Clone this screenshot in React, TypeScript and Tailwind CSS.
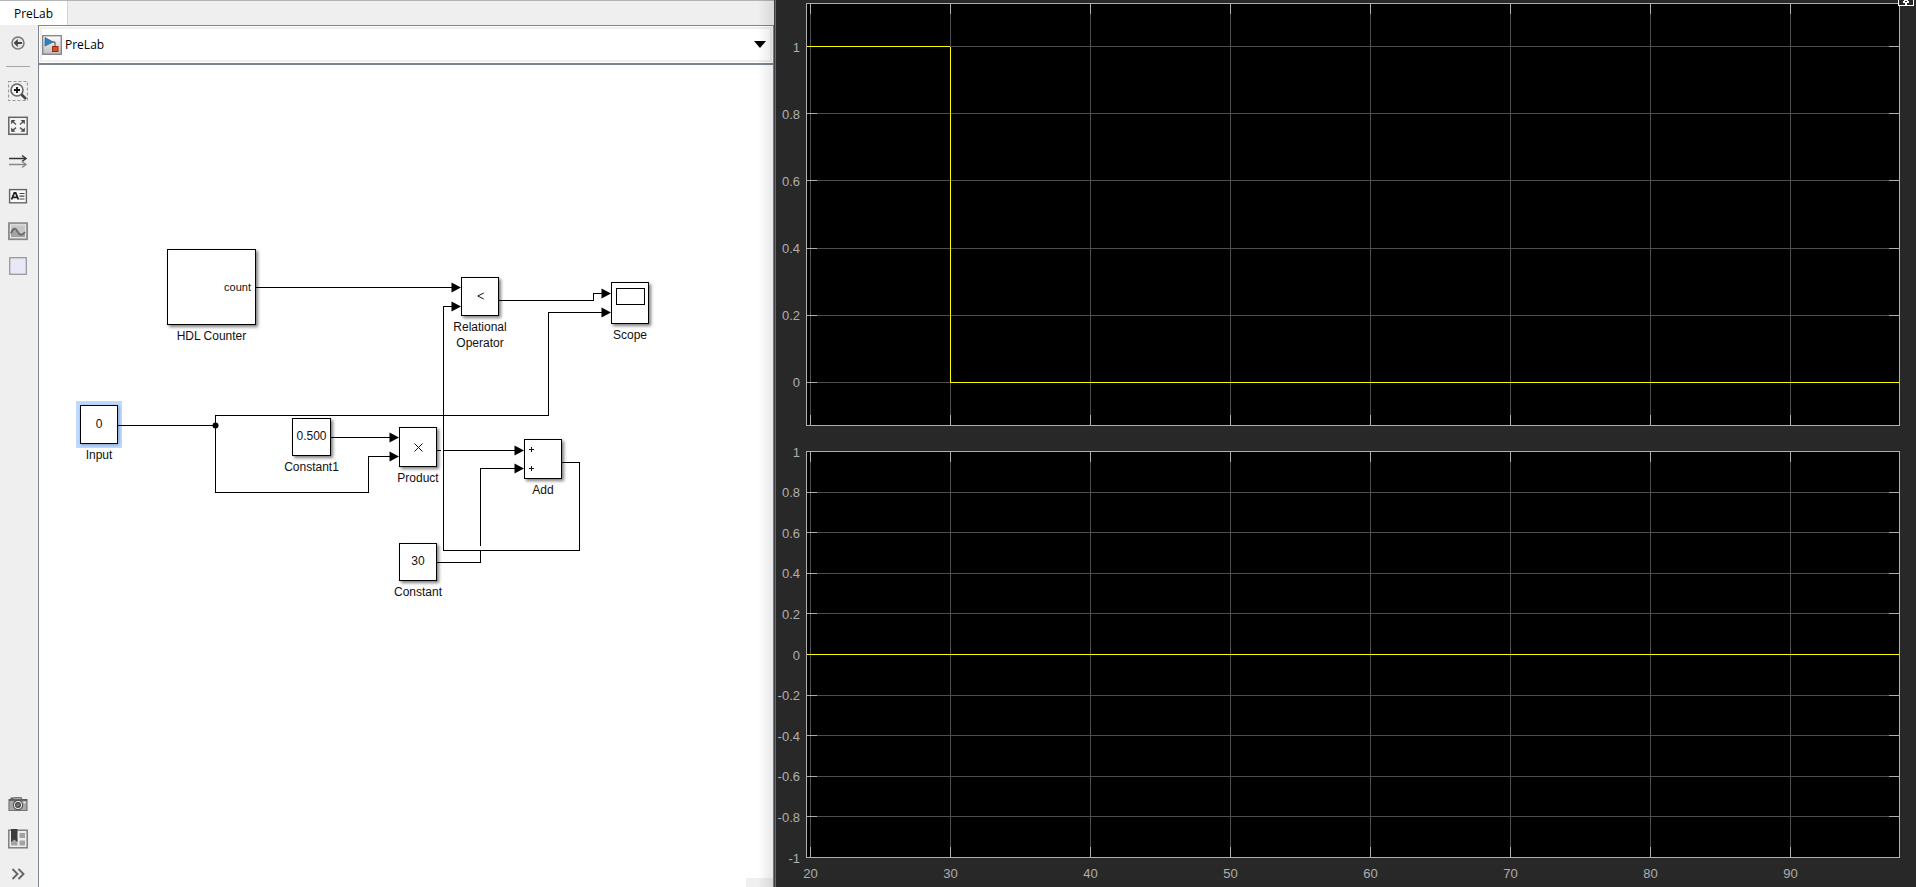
import type { ReactNode } from "react";

type Block = {
  name: string;
  label: string[];
  place: string;
  size: string;
  selected?: boolean;
  content?: ReactNode;
};

const blocks: Block[] = [
  {
    name: "HDL Counter",
    label: ["HDL Counter"],
    place: "left-[128px] top-[184px]",
    size: "w-[89px] h-[76px]",
    content: <span className="ml-auto pr-1 text-[11px]">count</span>,
  },
  {
    name: "Input",
    label: ["Input"],
    place: "left-[41px] top-[340px]",
    size: "w-[38px] h-[39px]",
    selected: true,
    content: <span className="pb-0.5">0</span>,
  },
  {
    name: "Constant1",
    label: ["Constant1"],
    place: "left-[253px] top-[353px]",
    size: "w-[39px] h-[38px]",
    content: <span className="pb-0.5">0.500</span>,
  },
  {
    name: "Product",
    label: ["Product"],
    place: "left-[360px] top-[362px]",
    size: "w-[38px] h-10",
    content: (
      <svg className="size-[9px]" viewBox="0 0 9 9" stroke="#111" fill="none">
        <path d="M.5 .5 8.5 8.5M8.5 .5 .5 8.5" />
      </svg>
    ),
  },
  {
    name: "Add",
    label: ["Add"],
    place: "left-[485px] top-[374px]",
    size: "w-[38px] h-10",
    content: (
      <span className="mr-auto flex flex-col gap-[14px] pl-1">
        {[0, 1].map((i) => (
          <svg key={i} className="size-[5px]" viewBox="0 0 5 5" stroke="#111" shapeRendering="crispEdges">
            <path d="M0 2.5H5M2.5 0V5" />
          </svg>
        ))}
      </span>
    ),
  },
  {
    name: "Constant",
    label: ["Constant"],
    place: "left-[360px] top-[478px]",
    size: "w-[38px] h-[38px]",
    content: <span className="pb-0.5">30</span>,
  },
  {
    name: "Relational Operator",
    label: ["Relational", "Operator"],
    place: "left-[422px] top-[212px]",
    size: "w-[38px] h-[39px]",
    content: (
      <svg className="mb-0.5 h-2 w-[7px]" viewBox="0 0 7 8" stroke="#111" fill="none">
        <path d="M6.8 1 .8 4 6.8 7" />
      </svg>
    ),
  },
  {
    name: "Scope",
    label: ["Scope"],
    place: "left-[572px] top-[217px]",
    size: "w-[38px] h-[42px]",
    content: <span className="mb-auto mt-[5px] h-[17px] w-[29px] border border-black" />,
  },
];

const wires = [
  "M217 222.5H414",
  "M460 235.5H554.5V228.5H564",
  "M79 360.5H176.5",
  "M176.5 360.5V350.5H509.5V247.5H564",
  "M176.5 360.5V427.5H329.5V391.5H352",
  "M292 372.5H352",
  "M398 385.5H402M405 385.5H477",
  "M398 497.5H441.5V486M441.5 481V403.5H477",
  "M523 397.5H540.5V485.5H404.5V241.5H414",
];

const arrowTips = [
  [422, 222],
  [422, 241],
  [572, 228],
  [572, 247],
  [360, 372],
  [360, 391],
  [485, 385],
  [485, 403],
];

function BlockNode({ block }: { block: Block }) {
  return (
    <div className={`absolute ${block.place} ${block.size}`}>
      <div
        className={`flex size-full items-center justify-center border border-black bg-white ${
          block.selected
            ? "shadow-[1px_1px_3px_#7f9cc4,0_0_0_4px_#bfdaff]"
            : "shadow-[2px_2px_3px_rgba(0,0,0,0.5)]"
        }`}
      >
        {block.content}
      </div>
      <div className="flex flex-col items-center pt-[3px] leading-4 whitespace-nowrap">
        {block.label.map((line) => (
          <span key={line}>{line}</span>
        ))}
      </div>
    </div>
  );
}

function Icon({ children }: { children: ReactNode }) {
  return (
    <svg className="size-5" viewBox="0 0 20 20" fill="none" stroke="#4a4a4a" strokeWidth="1.2">
      {children}
    </svg>
  );
}

const topTools = [
  {
    name: "Zoom",
    icon: (
      <Icon>
        <rect x=".5" y=".5" width="19" height="19" stroke="#999" strokeDasharray="3 2" />
        <circle cx="9" cy="9" r="6" fill="#f4f4f4" stroke="#666" strokeWidth="1.6" />
        <path d="M6 9H12M9 6V12" stroke="#111" strokeWidth="1.8" />
        <path d="M13.5 13.5 18 18" stroke="#444" strokeWidth="2.6" />
      </Icon>
    ),
  },
  {
    name: "Fit to view",
    icon: (
      <Icon>
        <rect x=".8" y="1.3" width="18.4" height="17" fill="#f5f5f5" stroke="#666" strokeWidth="1.5" />
        <path d="M3.2 4H7.4L3.2 8.200ZM16.800 4H12.600L16.800 8.200ZM16.800 15.800H12.600L16.800 11.600ZM3.200 15.800H7.400L3.200 11.600Z" fill="#444" stroke="none" />
        <path d="M4 4.800 8 8.400M16 4.800 12 8.400M16 15 12 11.600M4 15 8 11.600" stroke="#555" strokeWidth="1.400" />
      </Icon>
    ),
  },
  {
    name: "Signal lines",
    icon: (
      <Icon>
        <path d="M1 7.500H17" stroke="#333" strokeWidth="1.500" />
        <path d="M14 4.500 18 7.500 14 10.500" stroke="#333" strokeWidth="1.500" />
        <path d="M1 13.500H17" stroke="#888" strokeWidth="1.500" />
        <path d="M14 10.500 18 13.500 14 16.500" stroke="#888" strokeWidth="1.500" />
      </Icon>
    ),
  },
  {
    name: "Annotation",
    icon: (
      <Icon>
        <rect x="1.6" y="3.6" width="16.8" height="13.2" fill="#fafafa" stroke="#666" strokeWidth="1.400" />
        <path d="M3.6 13.5 6.3 7H7.7L10.4 13.5M4.8 11.4H9.2" stroke="#222" strokeWidth="1.8" />
        <path d="M11.5 7.5H16.5M11.5 10.2H16.5M11.5 13H16.5" stroke="#444" />
      </Icon>
    ),
  },
  {
    name: "Image",
    icon: (
      <Icon>
        <rect x=".8" y="2" width="18.4" height="16.400" fill="#b8b8b8" stroke="#888" strokeWidth="1.5" />
        <rect x="2.6" y="3.8" width="14.8" height="12.8" fill="#c6c6c6" stroke="#e2e2e2" />
        <path d="M3 12.500C5 6.500 7.500 6.500 9.500 10.500S14 14.500 17 11V16H3Z" fill="#a2a2a2" stroke="none" />
        <path d="M3 12.500C5 6.500 7.500 6.500 9.500 10.500S14 15 17 11" stroke="#6a6a6a" strokeWidth="1.8" />
      </Icon>
    ),
  },
  {
    name: "Area",
    icon: (
      <Icon>
        <rect x="1.7" y="1.700" width="16.600" height="16.600" fill="#e9e8f8" stroke="#999" strokeWidth="1.300" />
      </Icon>
    ),
  },
];

const bottomTools = [
  {
    name: "Screenshot",
    icon: (
      <Icon>
        <path d="M1 5.500H5L6 3.500H13L14 5.500H19V16.500H1Z" fill="#a8a8a8" stroke="#777" />
        <path d="M1 6H19" stroke="#555" strokeWidth="1.500" />
        <path d="M2.500 4.200H5" stroke="#555" strokeWidth="1.400" />
        <circle cx="10" cy="11" r="4.600" fill="#f0f0f0" stroke="#555" />
        <circle cx="10" cy="11" r="2.400" fill="#777" stroke="#444" />
        <path d="M15.500 8.500H17.500" stroke="#fff" strokeWidth="1.500" />
      </Icon>
    ),
  },
  {
    name: "Model browser",
    icon: (
      <Icon>
        <rect x=".8" y="1.200" width="18.400" height="17.600" fill="#ededed" stroke="#777" strokeWidth="1.400" />
        <path d="M11.500 4H17V9H11.500ZM11.500 11.500H17V16.500H11.500ZM3 10H9.500V16.500H3Z" fill="#a3a3a3" stroke="none" />
        <path d="M3 0H9.500V13L6.250 10.500 3 13Z" fill="#3c3c3c" stroke="none" />
      </Icon>
    ),
  },
  {
    name: "Show more",
    icon: (
      <Icon>
        <path d="M4.500 5 9.500 10 4.500 15M10.500 5 15.500 10 10.500 15" stroke="#666" strokeWidth="1.900" />
      </Icon>
    ),
  },
];

function Toolbar() {
  return (
    <nav aria-label="Tools" className="flex w-[38px] shrink-0 flex-col justify-between bg-[#efefef] pt-2 pr-0.5 pb-[3px]">
      <div className="flex flex-col items-center">
        <button aria-label="Back" className="size-5">
          <Icon>
            <circle cx="10" cy="10" r="6" fill="#e6e6e6" stroke="#777" strokeWidth="1.500" />
            <path d="M14 10H8" stroke="#444" strokeWidth="2" />
            <path d="M9.500 6.500 6 10 9.500 13.500Z" fill="#444" stroke="#444" strokeWidth=".6" />
          </Icon>
        </button>
        <hr className="mt-[13px] mb-3.5 w-6 border-[#a6a6a6]" />
        <div className="flex flex-col gap-[15px]">
          {topTools.map((t) => (
            <button key={t.name} aria-label={t.name} className="size-5">
              {t.icon}
            </button>
          ))}
        </div>
      </div>
      <div className="flex flex-col items-center gap-[15px]">
        {bottomTools.map((t) => (
          <button key={t.name} aria-label={t.name} className="size-5">
            {t.icon}
          </button>
        ))}
      </div>
    </nav>
  );
}

function ModelPath() {
  return (
    <div className="h-10 shrink-0 border-t border-b-2 border-[#7d838f] bg-white p-px">
      <div className="flex h-full items-center border-2 border-[#efefef]">
        <svg className="size-5" viewBox="0 0 20 20">
          <defs>
            <linearGradient id="tile" x2="0" y2="1">
              <stop offset="0" stopColor="#fff" />
              <stop offset="1" stopColor="#bdbdbd" />
            </linearGradient>
          </defs>
          <rect x=".7" y=".7" width="18.600" height="18.600" fill="url(#tile)" stroke="#888" strokeWidth="1.400" />
          <path d="M10 7H13V12" fill="none" stroke="#444" />
          <path d="M3 2.500 11 7 3 11Z" fill="#2e83bd" stroke="#1d5f91" strokeWidth=".7" />
          <rect x="10.500" y="11.500" width="5.500" height="5" fill="#d2502a" stroke="#9a2c12" />
        </svg>
        <div className="relative flex flex-1 items-center pl-[3px]">
          <select
            id="model-path"
            aria-label="Model path"
            className="h-6 w-full appearance-none bg-transparent text-xs leading-5"
          >
            <option>PreLab</option>
          </select>
          <svg className="pointer-events-none absolute top-2 right-1 h-[7px] w-3" viewBox="0 0 12 7">
            <path d="M0 0H12L6 7Z" />
          </svg>
        </div>
      </div>
    </div>
  );
}

function Diagram() {
  return (
    <main className="relative flex-1 overflow-hidden bg-white font-['Liberation_Sans',Arial,sans-serif] text-xs text-[#111]">
      {blocks.map((b) => (
        <BlockNode key={b.name} block={b} />
      ))}
      <svg className="pointer-events-none absolute inset-0 size-full" fill="none" stroke="#000">
        {wires.map((d) => (
          <path key={d} d={d} shapeRendering="crispEdges" />
        ))}
        <circle cx="176.500" cy="360.500" r="3" fill="#000" stroke="none" />
        {arrowTips.map(([x, y]) => (
          <path key={`${x}-${y}`} d={`M${x} ${y + 0.5}l-9.500 -5v10z`} fill="#000" stroke="none" />
        ))}
      </svg>
      <div className="absolute right-0 bottom-0 h-[9px] w-[27px] bg-[#efefef]" />
    </main>
  );
}

type PlotProps = {
  title: string;
  yMin: number;
  yMax: number;
  yTicks: number[];
  trace: [number, number][];
  showTime?: boolean;
};

const timeTicks = [20, 30, 40, 50, 60, 70, 80, 90];
const timeMin = 19.75;
const timeMax = 97.75;

function Plot({ title, yMin, yMax, yTicks, trace, showTime }: PlotProps) {
  const px = (t: number) => `${((t - timeMin) / (timeMax - timeMin)) * 100}%`;
  const py = (v: number) => `${((yMax - v) / (yMax - yMin)) * 100}%`;
  const inner = yTicks.filter((v) => v < yMax && v > yMin);
  return (
    <div className="min-h-0 border border-[#afafaf] bg-black">
      <svg
        role="img"
        aria-label={title}
        className="size-full overflow-visible font-['Liberation_Sans',Arial,sans-serif] text-[13px]"
        shapeRendering="crispEdges"
      >
        {timeTicks.map((t) => (
          <g key={t}>
            <line x1={px(t)} x2={px(t)} y1="0" y2="100%" stroke="#4d4d4d" />
            <line x1={px(t)} x2={px(t)} y1="0" y2="10" stroke="#afafaf" />
            <svg y="100%" className="overflow-visible">
              <line x1={px(t)} x2={px(t)} y1="-10" y2="0" stroke="#afafaf" />
            </svg>
          </g>
        ))}
        {inner.map((v) => (
          <g key={v}>
            <line x1="0" x2="100%" y1={py(v)} y2={py(v)} stroke="#4d4d4d" />
            <line x1="0" x2="10" y1={py(v)} y2={py(v)} stroke="#afafaf" />
            <svg x="100%" className="overflow-visible">
              <line x1="-10" x2="0" y1={py(v)} y2={py(v)} stroke="#afafaf" />
            </svg>
          </g>
        ))}
        {trace.slice(1).map(([t, v], i) => (
          <line key={i} x1={px(trace[i][0])} y1={py(trace[i][1])} x2={px(t)} y2={py(v)} stroke="#ffff00" />
        ))}
        {yTicks.map((v) => (
          <text key={v} x="-7" y={py(v)} dy="5" textAnchor="end" fill="#afafaf">
            {v}
          </text>
        ))}
        {showTime &&
          timeTicks.map((t) => (
            <text key={t} x={px(t)} y="100%" dy="21" textAnchor="middle" fill="#afafaf">
              {t}
            </text>
          ))}
      </svg>
    </div>
  );
}

function ScopeView() {
  return (
    <section aria-label="Scope" className="relative flex min-w-0 flex-1 border-l border-[#3b3f44] bg-[#282828]">
      <div className="grid flex-1 grid-rows-[423fr_407fr] gap-[25px] border-l border-[#2e8b57] pt-[3px] pr-4 pb-[29px] pl-[30px]">
        <Plot
          title="Relational Operator"
          yMin={-0.1265}
          yMax={1.1265}
          yTicks={[1, 0.8, 0.6, 0.4, 0.2, 0]}
          trace={[
            [timeMin, 1],
            [30, 1],
            [30, 0],
            [timeMax, 0],
          ]}
        />
        <Plot
          title="Input"
          yMin={-0.9975}
          yMax={0.9975}
          yTicks={[1, 0.8, 0.6, 0.4, 0.2, 0, -0.2, -0.4, -0.6, -0.8, -1]}
          trace={[
            [timeMin, 0],
            [timeMax, 0],
          ]}
          showTime
        />
      </div>
      <button aria-label="Maximize axes" className="absolute top-0 right-0.5 h-1.5 w-4 border border-t-0 border-white bg-[#282828]">
        <svg className="h-[5px] w-full" viewBox="0 0 14 5" shapeRendering="crispEdges">
          <path d="M5 0H9V1H10V3H8V5H6V3H4V1H5Z" fill="#fff" />
          <path d="M6 1H8V2H6Z" fill="#282828" />
        </svg>
      </button>
    </section>
  );
}

export default function App() {
  return (
    <div className="flex h-screen overflow-hidden">
      <div className="relative flex w-[40.400%] shrink-0 flex-col bg-[#efefef] font-['Open_Sans','Noto_Sans',sans-serif] text-xs text-black">
        <div role="tablist" className="flex h-[25px] shrink-0 border-t border-[#b4b4b4]">
          <button role="tab" aria-selected="true" className="w-[68px] border-r border-[#d4d4d4] bg-white pt-0.5 text-xs leading-4">
            PreLab
          </button>
        </div>
        <div className="flex min-h-0 flex-1">
          <Toolbar />
          <div className="flex min-w-0 flex-1 flex-col border-x border-[#7d838f]">
            <ModelPath />
            <Diagram />
          </div>
        </div>
        <div className="pointer-events-none absolute inset-y-0 right-0 w-4 bg-linear-to-r from-transparent to-black/10" />
      </div>
      <ScopeView />
    </div>
  );
}
